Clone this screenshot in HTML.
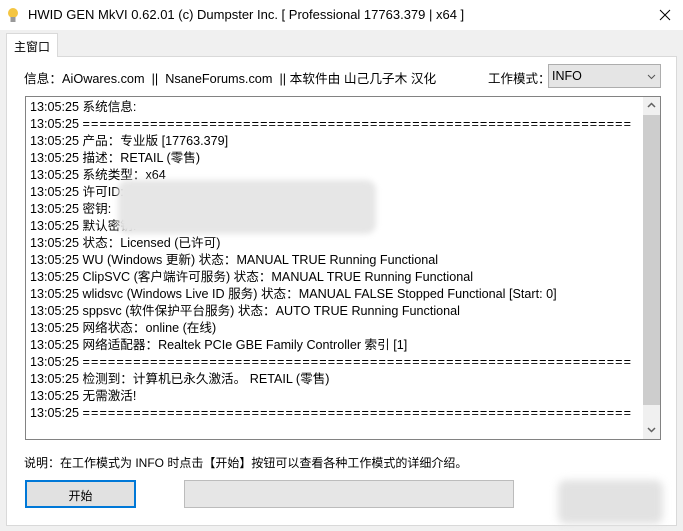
<!DOCTYPE html>
<html><head><meta charset="utf-8"><style>
*{margin:0;padding:0;box-sizing:border-box}
body{width:683px;height:531px;background:#f0f0f0;font-family:"Liberation Sans","Noto Sans CJK SC",sans-serif;font-size:12px;color:#000;position:relative;overflow:hidden}
.abs{position:absolute}
#title{left:0;top:0;width:683px;height:30px;background:#fff;}
#title .t{left:28px;top:7px;font-size:13px;white-space:nowrap}
#tab{left:6px;top:33px;width:52px;height:24px;background:#fff;border:1px solid #d9d9d9;border-bottom:none;z-index:2}
#tab span{position:absolute;left:7px;top:4px}
#panel{left:6px;top:56px;width:671px;height:470px;background:#fff;border:1px solid #d9d9d9}
#info{left:24px;top:68px;white-space:nowrap;font-size:12.7px}
#modelbl{left:488px;top:68px;font-size:12.5px}
#combo{left:548px;top:64px;width:113px;height:24px;background:#e5e5e5;border:1px solid #adadad}
#combo span{position:absolute;left:3px;top:4px;font-size:12.5px}
#log{left:25px;top:96px;width:636px;height:344px;border:1px solid #828282;background:#fff}
#lines{left:30px;top:99px;line-height:17px;font-size:12.6px;white-space:pre}
.eq{display:inline-block;width:550px;overflow:hidden;vertical-align:top;letter-spacing:1.1px}
#sb{left:643px;top:97px;width:17px;height:342px;background:#f0f0f0}
#thumb{left:643px;top:115px;width:17px;height:290px;background:#cdcdcd}
#blur{left:118px;top:180px;width:258px;height:54px;background:#e6e6e6;filter:blur(3px);border-radius:10px}
#note{left:24px;top:454px;font-size:12px;white-space:nowrap}
#start{left:25px;top:480px;width:111px;height:28px;background:#e1e1e1;border:2px solid #0078d7}
#start span{position:absolute;width:100%;text-align:center;top:5px}
#prog{left:184px;top:480px;width:330px;height:28px;background:#e6e6e6;border:1px solid #bcbcbc}
#blur2{left:558px;top:480px;width:105px;height:44px;background:#e2e2e2;filter:blur(4px);border-radius:8px}
</style></head><body>
<div id="title" class="abs">
<svg class="abs" style="left:7px;top:7px" width="12" height="17" viewBox="0 0 12 17"><circle cx="6" cy="6" r="5" fill="#f4c542"/><rect x="3.5" y="10" width="5" height="5" fill="#999"/></svg>
<div class="abs t">HWID GEN MkVI 0.62.01 (c) Dumpster Inc. [ Professional 17763.379 | x64 ]</div>
<svg class="abs" style="left:659px;top:9px" width="12" height="12" viewBox="0 0 12 12"><path d="M1 1L11 11M11 1L1 11" stroke="#000" stroke-width="1"/></svg>
</div>
<div id="panel" class="abs"></div>
<div id="tab" class="abs"><span>主窗口</span></div>
<div id="info" class="abs">信息：AiOwares.com &nbsp;|| &nbsp;NsaneForums.com &nbsp;|| 本软件由 山己几子木 汉化</div>
<div id="modelbl" class="abs">工作模式：</div>
<div id="combo" class="abs"><span>INFO</span><svg class="abs" style="left:98px;top:9px" width="9" height="6"><path d="M1 1L4.5 4.5L8 1" stroke="#555" fill="none"/></svg></div>
<div id="log" class="abs"></div>
<div id="lines" class="abs">13:05:25 系统信息:
13:05:25 <span class="eq">=================================================================</span>
13:05:25 产品：专业版 [17763.379]
13:05:25 描述：RETAIL (零售)
13:05:25 系统类型：x64
13:05:25 许可ID:
13:05:25 密钥:
13:05:25 默认密钥:
13:05:25 状态：Licensed (已许可)
13:05:25 WU (Windows 更新) 状态：MANUAL TRUE Running Functional
13:05:25 ClipSVC (客户端许可服务) 状态：MANUAL TRUE Running Functional
13:05:25 wlidsvc (Windows Live ID 服务) 状态：MANUAL FALSE Stopped Functional [Start: 0]
13:05:25 sppsvc (软件保护平台服务) 状态：AUTO TRUE Running Functional
13:05:25 网络状态：online (在线)
13:05:25 网络适配器：Realtek PCIe GBE Family Controller 索引 [1]
13:05:25 <span class="eq">=================================================================</span>
13:05:25 检测到：计算机已永久激活。 RETAIL (零售)
13:05:25 无需激活!
13:05:25 <span class="eq">=================================================================</span></div>
<div id="blur" class="abs"></div>
<div id="sb" class="abs"></div>
<div id="thumb" class="abs"></div>
<svg class="abs" style="left:647px;top:102px" width="9" height="6"><path d="M1 5L4.5 1.5L8 5" stroke="#606060" stroke-width="1.5" fill="none"/></svg>
<svg class="abs" style="left:647px;top:427px" width="9" height="6"><path d="M1 1L4.5 4.5L8 1" stroke="#606060" stroke-width="1.5" fill="none"/></svg>
<div id="note" class="abs">说明：在工作模式为 INFO 时点击【开始】按钮可以查看各种工作模式的详细介绍。</div>
<div id="start" class="abs"><span>开始</span></div>
<div id="prog" class="abs"></div>
<div id="blur2" class="abs"></div>
</body></html>
